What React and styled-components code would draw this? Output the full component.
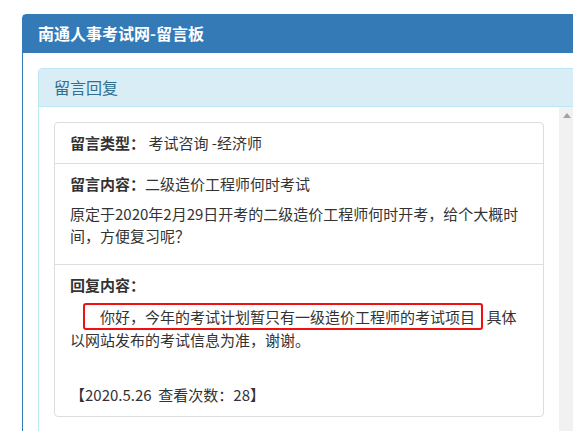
import styled, { createGlobalStyle } from "styled-components";

const GlobalStyle = createGlobalStyle`
  html, body {
    margin: 0;
    padding: 0;
    overflow: hidden;
    background: #fff;
  }
  body {
    font-family: "Noto Sans CJK SC", "Noto Sans", sans-serif;
    font-size: 15px;
    color: #333;
  }
`;

const Page = styled.div`
  padding: 14px 0 0 22px;
  height: 431px;
  box-sizing: border-box;
`;

const Panel = styled.div`
  width: 640px;
  height: 440px;
  border: 1px solid #337ab7;
  border-radius: 4px 4px 0 0;
  background: #fff;
`;

const PanelHeading = styled.div`
  background: #337ab7;
  color: #fff;
  font-size: 16px;
  font-weight: bold;
  line-height: 19px;
  padding: 9px 15px 10px;
`;

const PanelBody = styled.div`
  padding: 15px;
`;

const InfoPanel = styled.div`
  border: 1px solid #bce8f1;
  border-radius: 4px 4px 0 0;
  height: 400px;
`;

const InfoHeading = styled.div`
  background: #d9edf7;
  color: #31708f;
  font-size: 16px;
  line-height: 17px;
  padding: 10px 15px;
  border-bottom: 1px solid #bce8f1;
`;

const InfoBody = styled.div`
  display: flex;
  height: 360px;
`;

const Content = styled.div`
  width: 520px;
  padding: 15px;
  box-sizing: border-box;
`;

const Scrollbar = styled.div`
  width: 15px;
  background: #f1f1f1;
  display: flex;
  justify-content: center;
  padding-top: 6px;
  box-sizing: border-box;
`;

const ArrowUp = styled.div`
  width: 0;
  height: 0;
  border-left: 4px solid transparent;
  border-right: 4px solid transparent;
  border-bottom: 5px solid #a3a3a3;
`;

const Card = styled.div`
  width: 490px;
  box-sizing: border-box;
  border: 1px solid #ddd;
  border-radius: 4px;
`;

const Row = styled.div`
  padding: 10px 15px;
  line-height: 20px;
  border-top: ${(p) => (p.$first ? "none" : "1px solid #ddd")};
`;

const Label = styled.b`
  font-weight: bold;
`;

const Para = styled.p`
  margin: ${(p) => p.$margin || "9px 0 7px"};
  line-height: ${(p) => p.$lh || "22px"};
`;

const Highlight = styled.span`
  margin-left: 13px;
  padding: 1px 6px 1px 15px;
  border: 2px solid #f01010;
  border-radius: 3px;
`;

export default function App() {
  return (
    <>
      <GlobalStyle />
      <Page>
        <Panel>
          <PanelHeading>南通人事考试网-留言板</PanelHeading>
          <PanelBody>
            <InfoPanel>
              <InfoHeading>留言回复</InfoHeading>
              <InfoBody>
                <Content>
                  <Card>
                    <Row $first>
                      <Label>留言类型：</Label> 考试咨询 -经济师
                    </Row>
                    <Row>
                      <Label>留言内容：</Label>二级造价工程师何时考试
                      <Para>
                        原定于2020年2月29日开考的二级造价工程师何时开考，给个大概时间，方便复习呢？
                      </Para>
                    </Row>
                    <Row>
                      <Label>回复内容：</Label>
                      <Para $margin="10px 0 0" $lh="23px">
                        <Highlight>你好，今年的考试计划暂只有一级造价工程师的考试项目</Highlight>{" "}
                        具体以网站发布的考试信息为准，谢谢。
                      </Para>
                      <Para $margin="33px 0 0">【2020.5.26&nbsp;&nbsp;查看次数：28】</Para>
                    </Row>
                  </Card>
                </Content>
                <Scrollbar>
                  <ArrowUp />
                </Scrollbar>
              </InfoBody>
            </InfoPanel>
          </PanelBody>
        </Panel>
      </Page>
    </>
  );
}
